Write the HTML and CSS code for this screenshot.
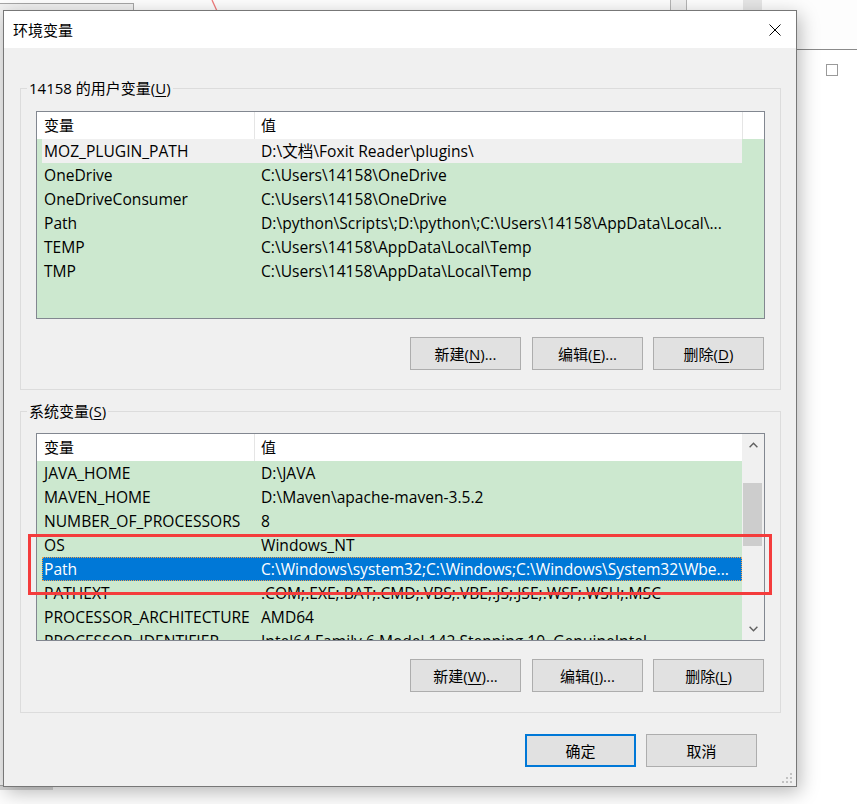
FILE: index.html
```html
<!DOCTYPE html>
<html lang="zh-CN">
<head>
<meta charset="utf-8">
<title>环境变量</title>
<link rel="stylesheet" href="styles.css">
</head>
<body>
<div class="desk">
  <div class="bgwin bgwin-left"></div>
  <div class="bgwin bgwin-right"><span class="bg-check"></span></div>
  <div class="bgstrip bgstrip-a"></div>
  <div class="bgstrip bgstrip-b"></div>
  <div class="bgstrip bgstrip-bottom"></div>
  <svg class="redline" width="10" height="12" viewBox="0 0 10 12"><line x1="2" y1="0" x2="7" y2="11" stroke="#f07a7a" stroke-width="1.3"/></svg>

  <div class="dialog">
    <div class="titlebar">
      <span class="title">环境变量</span>
      <svg class="close" width="12" height="12" viewBox="0 0 12 12"><path d="M0.5 0.5 L11.5 11.5 M11.5 0.5 L0.5 11.5" stroke="#000" stroke-width="1" fill="none"/></svg>
    </div>
    <div class="dlg-body">
      <fieldset class="group group-user">
        <legend>14158 的用户变量(<u>U</u>)</legend>
        <div class="list">
          <div class="lv">
            <div class="lv-head"><div class="hc hc1">变量</div><div class="hc hc2">值</div></div>
            <div class="row row-inactive"><div class="cell c1">MOZ_PLUGIN_PATH</div><div class="cell c2">D:\文档\Foxit Reader\plugins\</div></div>
            <div class="row"><div class="cell c1">OneDrive</div><div class="cell c2">C:\Users\14158\OneDrive</div></div>
            <div class="row"><div class="cell c1">OneDriveConsumer</div><div class="cell c2">C:\Users\14158\OneDrive</div></div>
            <div class="row"><div class="cell c1">Path</div><div class="cell c2">D:\python\Scripts\;D:\python\;C:\Users\14158\AppData\Local\...</div></div>
            <div class="row"><div class="cell c1">TEMP</div><div class="cell c2">C:\Users\14158\AppData\Local\Temp</div></div>
            <div class="row"><div class="cell c1">TMP</div><div class="cell c2">C:\Users\14158\AppData\Local\Temp</div></div>
          </div>
          <div class="lv-side"><div class="side-head"></div></div>
        </div>
        <div class="btns">
          <button class="btn btn-first">新建(<u>N</u>)...</button>
          <button class="btn">编辑(<u>E</u>)...</button>
          <button class="btn">删除(<u>D</u>)</button>
        </div>
      </fieldset>

      <fieldset class="group group-sys">
        <legend>系统变量(<u>S</u>)</legend>
        <div class="list">
          <div class="lv">
            <div class="lv-head"><div class="hc hc1">变量</div><div class="hc hc2">值</div></div>
            <div class="row"><div class="cell c1">JAVA_HOME</div><div class="cell c2">D:\JAVA</div></div>
            <div class="row"><div class="cell c1">MAVEN_HOME</div><div class="cell c2">D:\Maven\apache-maven-3.5.2</div></div>
            <div class="row"><div class="cell c1">NUMBER_OF_PROCESSORS</div><div class="cell c2">8</div></div>
            <div class="row"><div class="cell c1">OS</div><div class="cell c2">Windows_NT</div></div>
            <div class="row row-sel"><div class="cell c1">Path</div><div class="cell c2">C:\Windows\system32;C:\Windows;C:\Windows\System32\Wbe...</div></div>
            <div class="row"><div class="cell c1">PATHEXT</div><div class="cell c2">.COM;.EXE;.BAT;.CMD;.VBS;.VBE;.JS;.JSE;.WSF;.WSH;.MSC</div></div>
            <div class="row"><div class="cell c1">PROCESSOR_ARCHITECTURE</div><div class="cell c2">AMD64</div></div>
            <div class="row"><div class="cell c1">PROCESSOR_IDENTIFIER</div><div class="cell c2">Intel64 Family 6 Model 142 Stepping 10, GenuineIntel</div></div>
          </div>
          <div class="scrollbar">
            <div class="sb-arrow"><svg width="9" height="6" viewBox="0 0 9 6"><polyline points="0.6,5.2 4.5,1.2 8.4,5.2" fill="none" stroke="#606060" stroke-width="1.4"/></svg></div>
            <div class="sb-track"><div class="sb-thumb"></div></div>
            <div class="sb-arrow"><svg width="9" height="6" viewBox="0 0 9 6"><polyline points="0.6,0.8 4.5,4.8 8.4,0.8" fill="none" stroke="#606060" stroke-width="1.4"/></svg></div>
          </div>
        </div>
        <div class="btns">
          <button class="btn btn-first">新建(<u>W</u>)...</button>
          <button class="btn">编辑(<u>I</u>)...</button>
          <button class="btn">删除(<u>L</u>)</button>
        </div>
      </fieldset>

      <div class="footer">
        <button class="btn btn-default">确定</button>
        <button class="btn">取消</button>
      </div>
    </div>
    <div class="highlight-box"></div>
    <svg class="grip" width="12" height="12" viewBox="0 0 12 12">
      <rect x="9" y="0" width="2" height="2" fill="#c2c2c2"/>
      <rect x="5" y="4" width="2" height="2" fill="#c2c2c2"/>
      <rect x="9" y="4" width="2" height="2" fill="#c2c2c2"/>
      <rect x="1" y="8" width="2" height="2" fill="#c2c2c2"/>
      <rect x="5" y="8" width="2" height="2" fill="#c2c2c2"/>
      <rect x="9" y="8" width="2" height="2" fill="#c2c2c2"/>
    </svg>
  </div>
</div>
</body>
</html>
```
FILE: styles.css
```css
html, body {
  margin: 0;
  padding: 0;
  background: #ffffff;
}

body {
  font-family: "Open Sans", "Noto Sans CJK SC", sans-serif;
  font-size: 15px;
  color: #000;
}

.desk {
  position: relative;
  width: 857px;
  height: 804px;
  overflow: hidden;
  background: #fdfdfd;
}

/* background windows on the desktop */
.bgwin {
  position: absolute;
  box-sizing: border-box;
}

.bgwin-left {
  left: -20px;
  top: 3px;
  width: 154px;
  height: 783px;
  background: #f0f0f0;
  border: 1px solid #a6a6a6;
}

.bgwin-right {
  left: 760px;
  top: 49px;
  width: 120px;
  height: 770px;
  background: #ffffff;
  border-top: 1px solid #8a8a8a;
  padding: 14px 0 0 66px;
}

.bg-check {
  display: block;
  box-sizing: border-box;
  width: 12px;
  height: 12px;
  border: 1px solid #9a9a9a;
  background: #fff;
}

.bgstrip {
  position: absolute;
  top: 0;
  height: 10px;
  box-sizing: border-box;
}

.bgstrip-a {
  left: 670px;
  width: 17px;
  background: #f0f0f0;
  border-left: 1px solid #b4b4b4;
  border-right: 1px solid #b4b4b4;
}

.bgstrip-b {
  left: 743px;
  width: 19px;
  background: #e6e6e6;
}

.bgstrip-bottom {
  top: 786px;
  left: 0;
  width: 53px;
  height: 4px;
  background: #d6d6d6;
}

.redline {
  position: absolute;
  left: 210px;
  top: 0;
}

/* dialog window */
.dialog {
  position: absolute;
  left: 3px;
  top: 10px;
  width: 794px;
  height: 777px;
  box-sizing: border-box;
  border: 1px solid #777777;
  background: #f0f0f0;
  box-shadow: 3px 5px 18px rgba(0, 0, 0, 0.28);
  display: flex;
  flex-direction: column;
}

.titlebar {
  height: 37px;
  flex: none;
  background: #ffffff;
  display: flex;
  align-items: center;
  justify-content: space-between;
  padding: 0 15px 0 9px;
}

.title {
  font-size: 15px;
  line-height: 20px;
}

.close {
  display: block;
}

.dlg-body {
  flex: 1;
  display: flex;
  flex-direction: column;
  padding: 0 15px 0 16px;
}

.group {
  margin: 30px 0 0 0;
  border: 1px solid #dcdcdc;
  padding: 13px 15px 19px 15px;
  min-width: 0;
}

.group-sys {
  margin-top: 11px;
  padding-top: 12px;
  padding-bottom: 20px;
}

.group legend {
  padding: 0 2px;
  margin-left: -9px;
  font-size: 15px;
  line-height: 20px;
}

u {
  text-decoration: underline;
  text-underline-offset: 2px;
  text-decoration-thickness: 1px;
}

/* list view */
.list {
  box-sizing: border-box;
  height: 208px;
  border: 1px solid #828790;
  background: #cce8cf;
  display: flex;
}

.lv {
  flex: 1;
  min-width: 0;
  overflow: hidden;
}

.lv-head {
  display: flex;
  height: 27px;
  background: #ffffff;
}

.hc {
  box-sizing: border-box;
  line-height: 27px;
  font-size: 15px;
  white-space: nowrap;
}

.hc1 {
  width: 218px;
  padding-left: 7px;
  border-right: 1px solid #e5e5e5;
}

.hc2 {
  flex: 1;
  padding-left: 6px;
}

.row {
  display: flex;
  height: 24px;
  margin-left: 5px;
  line-height: 24px;
  font-size: 15.6px;
}

.cell {
  box-sizing: border-box;
  white-space: nowrap;
  overflow: hidden;
}

.c1 {
  width: 212px;
  flex: none;
  padding-left: 2px;
}

.c2 {
  flex: 1;
  min-width: 0;
  padding-left: 7px;
}

.row-inactive {
  background: #f0f0f0;
}

.row-sel {
  background: #0078d7;
  color: #ffffff;
  outline: 1px dotted #f2a24a;
  outline-offset: -1px;
}

.lv-side {
  width: 22px;
  flex: none;
}

.side-head {
  height: 27px;
  box-sizing: border-box;
  background: #ffffff;
  border-left: 1px solid #e5e5e5;
}

.scrollbar {
  width: 22px;
  flex: none;
  background: #f0f0f0;
  display: flex;
  flex-direction: column;
}

.sb-arrow {
  height: 22px;
  flex: none;
  display: flex;
  align-items: center;
  justify-content: center;
}

.sb-arrow svg {
  display: block;
}

.sb-track {
  flex: 1;
  padding: 27px 2px 0 1px;
}

.sb-thumb {
  height: 63px;
  background: #cdcdcd;
}

/* buttons */
.btns {
  display: flex;
  justify-content: flex-end;
  gap: 10px;
  margin-top: 18px;
  padding-right: 1px;
}

.btns .btn-first {
  margin-right: 1px;
}

.btn {
  box-sizing: border-box;
  width: 111px;
  height: 33px;
  margin: 0;
  padding: 0;
  border: 1px solid #adadad;
  background: #e1e1e1;
  font-family: "Open Sans", "Noto Sans CJK SC", sans-serif;
  font-size: 15px;
  line-height: 20px;
  color: #000;
}

.btn-default {
  border: 2px solid #0078d7;
}

.footer {
  display: flex;
  justify-content: flex-end;
  gap: 10px;
  margin-top: 21px;
  padding-right: 24px;
}

/* annotation overlay and resize grip */
.highlight-box {
  position: absolute;
  left: 24px;
  top: 523px;
  width: 744px;
  height: 61px;
  box-sizing: border-box;
  border: 3px solid #f43c3c;
}

.grip {
  position: absolute;
  right: 3px;
  bottom: 1px;
}
```
